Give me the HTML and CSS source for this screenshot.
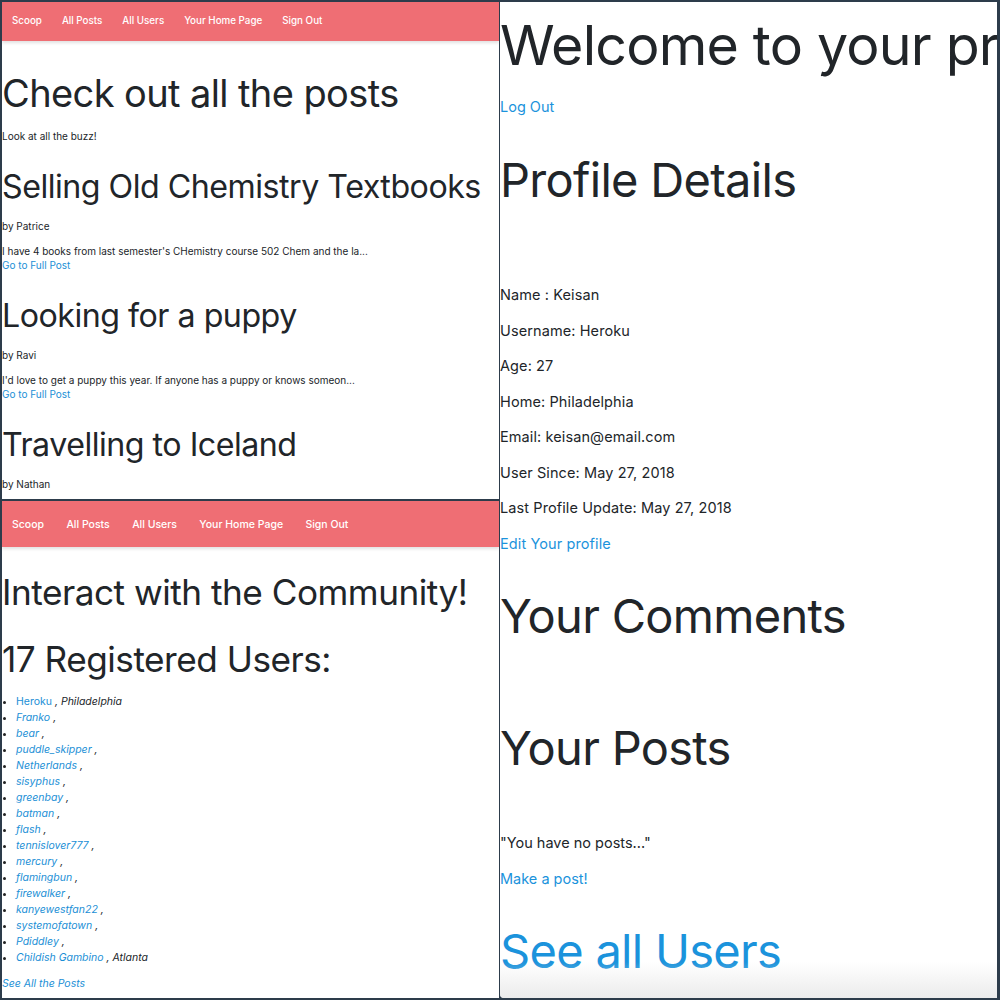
FILE: index.html
```html
<!DOCTYPE html>
<html>
<head>
<meta charset="utf-8">
<link rel="stylesheet" href="styles.css">
</head>
<body>
<div class="collage">
  <section class="panel posts">
    <nav class="navbar nav-sm">
      <a>Scoop</a><a>All Posts</a><a>All Users</a><a>Your Home Page</a><a>Sign Out</a>
    </nav>
    <h1 class="page-title">Check out all the posts</h1>
    <p class="small lead">Look at all the buzz!</p>
    <article class="post">
      <h2 class="post-title">Selling Old Chemistry Textbooks</h2>
      <p class="small by">by Patrice</p>
      <p class="small excerpt">I have 4 books from last semester's CHemistry course 502 Chem and the la...</p>
      <a class="small link">Go to Full Post</a>
    </article>
    <article class="post">
      <h2 class="post-title">Looking for a puppy</h2>
      <p class="small by">by Ravi</p>
      <p class="small excerpt">I'd love to get a puppy this year. If anyone has a puppy or knows someon...</p>
      <a class="small link">Go to Full Post</a>
    </article>
    <article class="post">
      <h2 class="post-title">Travelling to Iceland</h2>
      <p class="small by">by Nathan</p>
    </article>
  </section>

  <section class="panel profile">
    <h1 class="welcome">Welcome to your profile</h1>
    <a class="plink logout">Log Out</a>
    <h2 class="section-title details">Profile Details</h2>
    <div class="details-list">
      <p>Name : Keisan</p>
      <p>Username: Heroku</p>
      <p>Age: 27</p>
      <p>Home: Philadelphia</p>
      <p>Email: keisan@email.com</p>
      <p>User Since: May 27, 2018</p>
      <p>Last Profile Update: May 27, 2018</p>
      <p><a class="plink">Edit Your profile</a></p>
    </div>
    <h2 class="section-title comments">Your Comments</h2>
    <h2 class="section-title yposts">Your Posts</h2>
    <p class="noposts">"You have no posts..."</p>
    <p class="makepost"><a class="plink">Make a post!</a></p>
    <h2 class="section-title seeall"><a class="plink">See all Users</a></h2>
    <div class="fade"></div>
  </section>

  <section class="panel users">
    <nav class="navbar nav-md">
      <a>Scoop</a><a>All Posts</a><a>All Users</a><a>Your Home Page</a><a>Sign Out</a>
    </nav>
    <h1 class="users-title">Interact with the Community!</h1>
    <h1 class="users-title">17 Registered Users:</h1>
    <ul class="user-list">
      <li><a class="ulink upright">Heroku</a> , <em>Philadelphia</em></li>
      <li><a class="ulink">Franko</a> ,</li>
      <li><a class="ulink">bear</a> ,</li>
      <li><a class="ulink">puddle_skipper</a> ,</li>
      <li><a class="ulink">Netherlands</a> ,</li>
      <li><a class="ulink">sisyphus</a> ,</li>
      <li><a class="ulink">greenbay</a> ,</li>
      <li><a class="ulink">batman</a> ,</li>
      <li><a class="ulink">flash</a> ,</li>
      <li><a class="ulink">tennislover777</a> ,</li>
      <li><a class="ulink">mercury</a> ,</li>
      <li><a class="ulink">flamingbun</a> ,</li>
      <li><a class="ulink">firewalker</a> ,</li>
      <li><a class="ulink">kanyewestfan22</a> ,</li>
      <li><a class="ulink">systemofatown</a> ,</li>
      <li><a class="ulink">Pdiddley</a> ,</li>
      <li><a class="ulink">Childish Gambino</a> , <em>Atlanta</em></li>
    </ul>
    <a class="ulink seeposts">See All the Posts</a>
  </section>
</div>
</body>
</html>
```

FILE: styles.css
```css
html, body {
  margin: 0;
  padding: 0;
  background: #2d3c4b;
}
body {
  font-family: Inter, "Noto Sans", sans-serif;
  color: #212529;
}
.collage {
  width: 1000px;
  height: 1000px;
  box-sizing: border-box;
  padding: 2px 3px 3px 2px;
  display: grid;
  grid-template-columns: 497px 497px;
  grid-template-rows: 497px 497px;
  column-gap: 1px;
  row-gap: 2px;
}
.panel {
  background: #fff;
  overflow: hidden;
  position: relative;
}
.posts { grid-column: 1; grid-row: 1; }
.users { grid-column: 1; grid-row: 2; }
.profile { grid-column: 2; grid-row: 1 / span 2; border-bottom-left-radius: 4px; }

p, h1, h2, ul { margin: 0; }
a { display: block; }

/* navbars */
.navbar {
  background: #ef6e74;
  display: flex;
  align-items: center;
  box-shadow: 0 2px 3px rgba(0,0,0,0.12);
}
.navbar a {
  color: #fff;
  font-weight: 500;
}
.nav-sm { height: 36px; padding-bottom: 3px; font-size: 9.8px; }
.nav-sm a { padding: 0 10px; }
.nav-sm a:first-child { padding-left: 10px; }
.nav-md { height: 46px; font-size: 10.5px; }
.nav-md a { padding: 0 11.2px; }
.nav-md a:first-child { padding-left: 10px; }

/* posts panel */
.page-title {
  font-weight: 400;
  font-size: 38px;
  line-height: 48px;
  margin-top: 28px;
  letter-spacing: -0.6px;
}
.small {
  font-size: 10px;
  line-height: 14px;
}
.lead { margin-top: 12px; }
.post-title {
  font-weight: 400;
  font-size: 32.2px;
  line-height: 42px;
  margin-top: 23px;
  letter-spacing: -0.5px;
}
.by, .excerpt { margin-top: 11px; }
.link { color: #1b8fd6; }

/* users panel */
.users-title {
  font-weight: 400;
  font-size: 35.2px;
  line-height: 44px;
  letter-spacing: -0.5px;
  margin-top: 23px;
}
.user-list {
  list-style: none;
  padding: 0;
  margin-top: 13px;
  font-size: 10.5px;
  line-height: 16px;
}
.user-list li {
  display: flex;
  align-items: center;
  padding-left: 14px;
  position: relative;
  font-style: italic;
  white-space: pre;
}
.user-list li::before {
  content: "";
  position: absolute;
  left: 1px;
  top: 7px;
  width: 3px;
  height: 3px;
  border-radius: 50%;
  background: #222;
}
.user-list em { font-style: italic; }
.ulink { color: #1b8fd6; font-style: italic; display: inline; }
.ulink.upright { font-style: normal; }
.seeposts {
  display: block;
  font-size: 10.5px;
  line-height: 16px;
  margin-top: 10px;
}

/* profile panel */
.welcome {
  font-weight: 400;
  font-size: 55.5px;
  line-height: 70px;
  margin-top: 8px;
  white-space: nowrap;
  letter-spacing: -0.8px;
}
.plink { color: #1b93dc; }
.logout {
  font-size: 14.5px;
  line-height: 20px;
  margin-top: 17px;
}
.section-title {
  font-weight: 400;
  font-size: 47px;
  line-height: 56px;
  letter-spacing: -0.7px;
}
.details { margin-top: 35px; }
.details-list {
  margin-top: 77px;
  font-size: 14.5px;
  line-height: 20px;
  letter-spacing: 0.1px;
}
.details-list p { margin-bottom: 15.5px; }
.details-list p:last-child { margin-bottom: 0; }
.comments { margin-top: 34px; }
.yposts { margin-top: 76px; }
.noposts {
  font-size: 14.5px;
  line-height: 20px;
  margin-top: 57px;
}
.makepost {
  font-size: 14.5px;
  line-height: 20px;
  margin-top: 16px;
}
.seeall { margin-top: 34px; }
.fade {
  position: absolute;
  left: 0; right: 0; bottom: 0;
  height: 36px;
  background: linear-gradient(to bottom, rgba(238,238,238,0), rgba(232,232,232,0.85));
  pointer-events: none;
}
```
